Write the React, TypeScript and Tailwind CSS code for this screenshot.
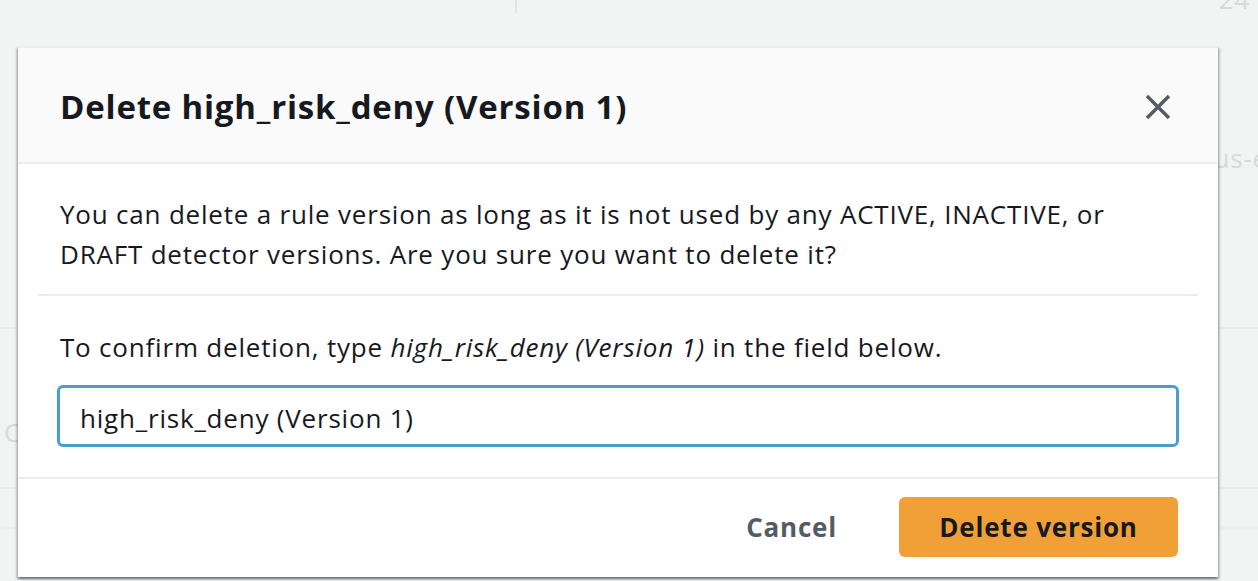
import { useState } from 'react'

export default function App() {
  const [value, setValue] = useState('high_risk_deny (Version 1)')

  return (
    <div className="relative h-[581px] w-full overflow-hidden bg-[#f2f3f3] font-['Open_Sans',sans-serif] tracking-[0.8px] text-[#16191f]">
      {/* page behind the modal */}
      <div className="flex h-[14px]">
        <div className="w-[515px]" />
        <div className="h-[13px] w-[2px] bg-[#e1e4e4]" />
        <div className="flex-1" />
        <div className="-mt-[16px] pr-[8px] text-[26px] leading-[30px] text-[#d5dbdb]">24</div>
      </div>
      <div className="mt-[129px] flex justify-end text-[26px] leading-[30px] text-[#d5dbdb]">
        <span className="-mr-[10px]">us-e</span>
      </div>
      <div className="mt-[154px] h-[2px] bg-[#e9ebeb]" />
      <div className="mt-[88px] pl-[4px] text-[26px] leading-[30px] text-[#d5dbdb]">C</div>
      <div className="mt-[40px] h-[2px] bg-[#e9ebeb]" />
      <div className="mt-[38px] h-[2px] bg-[#eceeee]" />

      {/* modal */}
      <div className="absolute left-[18px] top-[46px] w-[1200px] border-t-2 border-[#eaeded] bg-white shadow-[0_2px_2px_0_rgba(0,28,36,0.35),2px_2px_2px_0_rgba(0,28,36,0.2),-2px_2px_2px_0_rgba(0,28,36,0.2)]">
        <div className="flex h-[116px] items-center justify-between border-b-2 border-[#eaeded] bg-[#fafafa] pt-[3px] pl-[42px] pr-[47px]">
          <h2 className="text-[33px] font-bold leading-[40px]">Delete high_risk_deny (Version 1)</h2>
          <button className="text-[#545b64]">
            <svg width="26" height="26" viewBox="0 0 26 26" fill="none" stroke="currentColor" strokeWidth="3.5">
              <path d="M2 2L24 24M24 2L2 24" />
            </svg>
          </button>
        </div>

        <div className="px-[20px] pt-[30px] pb-[30px]">
          <p className="px-[22px] text-[26px] leading-[40px]">
            You can delete a rule version as long as it is not used by any ACTIVE, INACTIVE, or DRAFT detector versions. Are you sure you want to delete it?
          </p>
          <div className="mt-[20px] h-[2px] bg-[#eaeded]" />
          <p className="mt-[31px] px-[22px] text-[26px] leading-[40px]">
            To confirm deletion, type <em>high_risk_deny (Version 1)</em> in the field below.
          </p>
          <div className="mt-[18px] px-[19px]">
            <input
              autoFocus
              value={value}
              onChange={(e) => setValue(e.target.value)}
              className="box-border h-[62px] w-full rounded-[6px] border-[3px] border-[#4a9fc8] px-[20px] pt-[3px] text-[26px] tracking-[0.8px] text-[#16191f] caret-[#16191f] outline-none"
            />
          </div>
        </div>

        <div className="flex items-center justify-end gap-[62px] border-t-2 border-[#eaeded] pt-[18px] pb-[20px] pr-[40px]">
          <button className="text-[26px] font-bold text-[#545b64]">Cancel</button>
          <button className="h-[60px] w-[279px] rounded-[6px] bg-[#f1a037] text-[26px] font-bold text-[#16191f]">
            Delete version
          </button>
        </div>
      </div>
    </div>
  )
}
